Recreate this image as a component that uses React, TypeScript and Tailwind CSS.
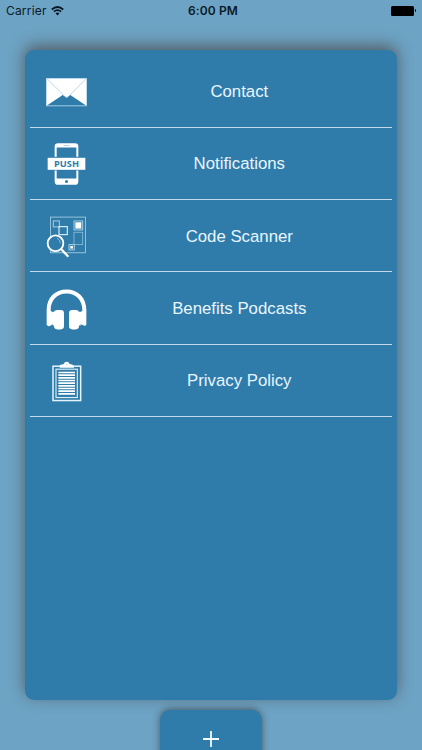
import type { ReactNode } from "react";

function MailIcon() {
  return (
    <svg viewBox="0 -33 180 216" className="h-[72px] w-[60px] shrink-0" fill="none">
      <rect x="31.500" y="37.500" width="120" height="82" stroke="#b9dcf0" strokeWidth="2.500" />
      <path d="M32 38H151V118H149L103 87 92 95 80 87 34 118H32Z" fill="#fff" />
      <path d="M33 38 86 91 92 95 98 91 150 38" stroke="#8fbcd6" strokeWidth="1.800" />
    </svg>
  );
}

function PushIcon() {
  return (
    <svg viewBox="0 -20.4 180 216" className="h-[72px] w-[60px] shrink-0" fill="none">
      <path
        fillRule="evenodd"
        fill="#fff"
        d="M66 28H117Q127 28 127 38V142Q127 153 117 153H66Q56 153 56 142V38Q56 28 66 28ZM62 41V134H121V41Z"
      />
      <path d="M84 35H100" stroke="#8fbcd6" strokeWidth="2" strokeLinecap="round" />
      <circle cx="91.500" cy="143" r="4.500" fill="#2f7caa" />
      <rect x="33" y="69" width="117" height="41" fill="#2f7caa" />
      <rect x="35" y="72" width="113" height="36" fill="#fff" />
      <text
        x="91.500"
        y="100"
        textAnchor="middle"
        textLength="75"
        lengthAdjust="spacingAndGlyphs"
        fontSize="28"
        fontWeight="700"
        fill="#2f7caa"
        fontFamily="'Open Sans', 'Noto Sans', sans-serif"
      >
        PUSH
      </text>
    </svg>
  );
}

function ScannerIcon() {
  return (
    <svg viewBox="0 -19.8 180 216" className="h-[72px] w-[60px] shrink-0" fill="none">
      <rect x="43.500" y="31.500" width="105" height="107" stroke="#a8cfe5" strokeWidth="2.500" />
      <rect x="52" y="43" width="18" height="18" stroke="#a8cfe5" strokeWidth="3" />
      <rect x="69" y="60" width="25" height="24" stroke="#d9edf8" strokeWidth="3.500" />
      <rect x="114" y="43" width="26" height="27" stroke="#a8cfe5" strokeWidth="3" />
      <rect x="118" y="47" width="18" height="19" fill="#fff" />
      <rect x="114" y="77" width="26" height="37" stroke="#8dbcd7" strokeWidth="2.500" />
      <rect x="99" y="114" width="16" height="16" stroke="#a8cfe5" strokeWidth="3" />
      <rect x="103" y="118" width="8" height="8" fill="#fff" />
      <circle cx="58.500" cy="110" r="23.500" fill="#2f7caa" stroke="#fff" strokeWidth="5.500" />
      <path d="M64 95Q72 100 73 109" stroke="#8dbcd7" strokeWidth="3" strokeLinecap="round" />
      <path d="m76 128 19 20" stroke="#fff" strokeWidth="7" strokeLinecap="round" />
    </svg>
  );
}

function HeadphonesIcon() {
  return (
    <svg viewBox="0 -25.2 180 216" className="h-[72px] w-[60px] shrink-0" fill="none">
      <path
        fill="#fff"
        d="M32 133V88C32 51 57 27 91.500 27S151 51 151 88V133Q147 139 140 134L132 131V96L139 91C140 59 120 39 91.500 39S43 59 44 91L51 96V131L43 136Q36 140 32 133Z"
      />
      <rect x="54" y="89" width="30" height="58" rx="10" fill="#fff" />
      <rect x="99" y="89" width="30" height="58" rx="10" fill="#fff" />
      <path d="M50 94H58V135H50ZM125 94H134V135H125Z" fill="#fff" />
    </svg>
  );
}

function ClipboardIcon() {
  return (
    <svg viewBox="0 -18.6 180 216" className="h-[72px] w-[60px] shrink-0" fill="none">
      <rect x="51" y="48" width="83" height="103" stroke="#e4f3fb" strokeWidth="4.500" />
      <rect x="60" y="57" width="64" height="85" stroke="#d9edf8" strokeWidth="3.500" />
      <path d="M71 53V47Q72 43 79 43L84 41Q85 35 92 35T100 41L107 43Q114 44 114 53Z" fill="#fff" />
      <circle cx="92" cy="42" r="1.500" fill="#8fbcd6" />
      <path
        d="M67 67H117M67 75H117M67 83H117M67 91H117M67 99H117M67 107H117M67 115H117M67 123H117M67 131H117"
        stroke="#fff"
        strokeWidth="5"
      />
    </svg>
  );
}

function MenuRow({ icon, label }: { icon: ReactNode; label: string }) {
  return (
    <li className="flex h-[72.35px] items-center border-b border-[#c4dcea] pl-[6px]">
      {icon}
      <span className="mr-[12px] ml-[2.6px] flex-1 pt-[2px] text-center text-[16.8px] leading-6 text-[#e9f6ff]">
        {label}
      </span>
    </li>
  );
}

export default function App() {
  return (
    <div className="flex h-[750px] w-[422px] flex-col overflow-hidden bg-[#6da3c4] font-['Liberation_Sans',Arial,sans-serif]">
      <header className="grid h-[50px] shrink-0 grid-cols-3 items-start px-[6px] pt-[3px] font-['Inter',sans-serif] text-[12px] leading-4 text-[#0a1a28]">
        <div className="flex items-center gap-[4px]">
          <span className="tracking-[0.18px]">Carrier</span>
          <svg viewBox="0 0 13 10" className="mb-px h-[10px] w-[13px]" fill="none" stroke="#061522">
            <path d="M.8 3.500Q6.500-1.500 12.200 3.500" strokeWidth="1.700" />
            <path d="M2.900 5.700Q6.500 2.500 10.100 5.700" strokeWidth="1.600" />
            <path d="M4.500 7.300Q6.500 5.700 8.500 7.300L6.500 9.500Z" fill="#061522" stroke="none" />
          </svg>
        </div>
        <span className="pl-[4px] text-center font-semibold tracking-[0.1px] whitespace-nowrap">6:00 PM</span>
        <div className="flex items-center justify-end gap-px pt-[3px]">
          <span className="h-[9.500px] w-[22.500px] rounded-[1.500px] bg-black" />
          <span className="h-[3px] w-[1.500px] rounded-r-full bg-black" />
        </div>
      </header>
      <main className="mx-[25px] h-[649.5px] shrink-0 rounded-[9px] bg-[#2f7caa] px-[5px] pt-[5.2px] shadow-[0_-4px_15px_rgba(75,75,75,0.8)]">
        <ul>
          <MenuRow icon={<MailIcon />} label="Contact" />
          <MenuRow icon={<PushIcon />} label="Notifications" />
          <MenuRow icon={<ScannerIcon />} label="Code Scanner" />
          <MenuRow icon={<HeadphonesIcon />} label="Benefits Podcasts" />
          <MenuRow icon={<ClipboardIcon />} label="Privacy Policy" />
        </ul>
      </main>
      <button
        aria-label="Add"
        className="mt-[10px] ml-[160px] flex h-[60px] w-[102px] shrink-0 justify-center rounded-t-[10px] bg-[#2f7caa] pt-[21px] shadow-[0_-1px_7px_rgba(60,60,60,0.7)]"
      >
        <svg viewBox="0 0 16 16" className="h-4 w-4" stroke="#f4faff" strokeWidth="1.800">
          <path d="M8 0V16M0 8H16" />
        </svg>
      </button>
    </div>
  );
}
